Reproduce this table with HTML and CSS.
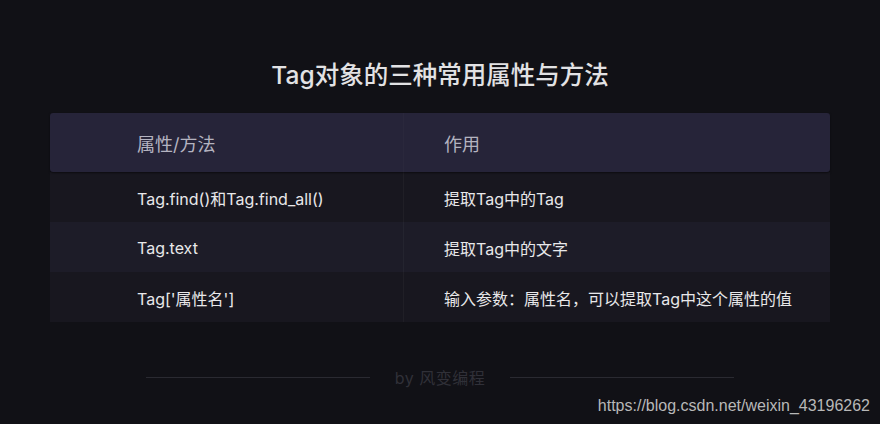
FILE: index.html
```html
<!DOCTYPE html>
<html lang="zh">
<head>
<meta charset="utf-8">
<link rel="stylesheet" href="styles.css">
</head>
<body>
<div class="page">
  <h1 class="title">Tag对象的三种常用属性与方法</h1>
  <div class="table">
    <div class="row head">
      <div class="c1">属性/方法</div>
      <div class="c2">作用</div>
    </div>
    <div class="row odd">
      <div class="c1">Tag.find()和Tag.find_all()</div>
      <div class="c2">提取Tag中的Tag</div>
    </div>
    <div class="row even">
      <div class="c1">Tag.text</div>
      <div class="c2">提取Tag中的文字</div>
    </div>
    <div class="row odd">
      <div class="c1">Tag['属性名']</div>
      <div class="c2">输入参数：属性名，可以提取Tag中这个属性的值</div>
    </div>
  </div>
  <div class="footer">
    <span class="line"></span>
    <span class="by">by 风变编程</span>
    <span class="line"></span>
  </div>
  <div class="mark">https://blog.csdn.net/weixin_43196262</div>
</div>
</body>
</html>
```
FILE: styles.css
```css
html, body {
  margin: 0;
  padding: 0;
  background: #111116;
}
.page {
  width: 880px;
  height: 424px;
  background: #111116;
  font-family: "Inter", "Noto Sans CJK SC", sans-serif;
  display: flex;
  flex-direction: column;
  align-items: center;
  overflow: hidden;
}
.title {
  margin: 59px 0 0;
  height: 32px;
  line-height: 32px;
  font-size: 24.5px;
  font-weight: 500;
  color: #e2e2e4;
}
.table {
  margin-top: 22px;
  width: 780px;
  display: flex;
  flex-direction: column;
}
.row {
  display: flex;
  height: 50px;
  align-items: stretch;
}
.row > div {
  display: flex;
  align-items: center;
}
.c1 {
  width: 266px;
  padding-left: 87px;
  border-right: 1px solid rgba(255,255,255,0.035);
}
.c2 {
  flex: 1;
  padding-left: 40px;
}
.head {
  height: 59px;
  background: #262439;
  border-radius: 3px;
  box-shadow: 0 1px 2px rgba(0,0,0,0.5);
  position: relative;
  z-index: 1;
}
.head > div {
  font-size: 18px;
  color: #b4b3c0;
  padding-top: 1px;
}
.head .c1 { border-right-color: rgba(255,255,255,0.02); }
.odd { background: #18171f; }
.even { background: #1d1c28; }
.odd > div, .even > div {
  font-size: 16px;
  color: #e8e8ea;
  padding-top: 2px;
}
.footer {
  margin-top: 43px;
  width: 588px;
  display: flex;
  align-items: center;
  gap: 25px;
}
.line {
  flex: 1;
  height: 1px;
  background: #2a2a31;
}
.by {
  font-size: 16px;
  color: #303038;
  letter-spacing: 0.5px;
}
.mark {
  align-self: flex-end;
  margin-top: 8px;
  margin-right: 10px;
  font-family: "Liberation Sans", Arial, sans-serif;
  font-size: 16px;
  color: #b8b8b8;
}
```
